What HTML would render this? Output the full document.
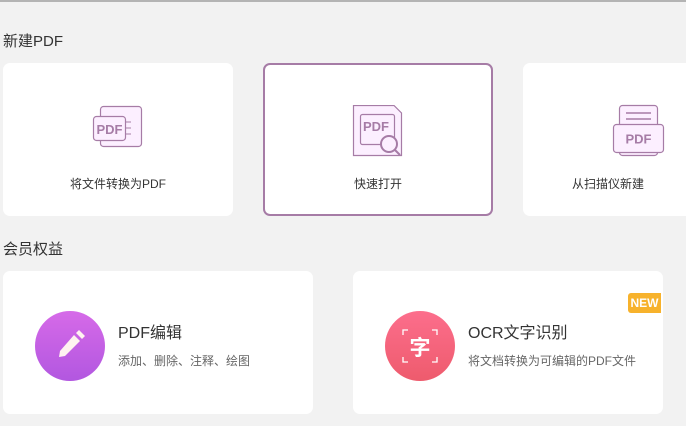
<!DOCTYPE html>
<html><head><meta charset="utf-8"><style>
*{margin:0;padding:0;box-sizing:border-box}
body{width:686px;height:426px;background:#f2f2f2;font-family:"Liberation Sans","Noto Sans CJK SC",sans-serif;position:relative;overflow:hidden;color:#333}
.top{position:absolute;left:0;top:0;width:686px;height:2px;background:#b4b4b4}
h2{position:absolute;font-weight:normal;font-size:15px;color:#333;left:3px}
.card{position:absolute;background:#fff;border-radius:7px}
.lbl{position:absolute;width:100%;text-align:center;top:112px;font-size:12px;color:#333}
svg{position:absolute}
.t{position:absolute;font-size:16px;color:#333}
.s{position:absolute;font-size:12px;color:#666}
.circ{position:absolute;width:70px;height:70px;border-radius:50%}
</style></head><body>
<div class="top"></div>
<h2 style="top:30px">新建PDF</h2>
<div class="card" style="left:3px;top:63px;width:230px;height:153px">
<svg style="left:88px;top:40px" width="56" height="56" viewBox="0 0 56 56">
<rect x="9.5" y="3.5" width="41" height="40" rx="3" fill="#fcefff" stroke="#a67ca6" stroke-width="1.2"/>
<rect x="2.5" y="13.5" width="32" height="24" rx="3" fill="#fcefff" stroke="#a67ca6" stroke-width="1.2"/>
<line x1="35" y1="19" x2="40" y2="19" stroke="#a67ca6"/><line x1="35" y1="25" x2="40" y2="25" stroke="#a67ca6"/><line x1="35" y1="31" x2="40" y2="31" stroke="#a67ca6"/>
<text x="18.5" y="31" text-anchor="middle" font-size="13" font-weight="bold" fill="#a67ca6" font-family="Liberation Sans">PDF</text>
</svg>
<div class="lbl">将文件转换为PDF</div></div>
<div class="card" style="left:263px;top:63px;width:230px;height:153px;border:2px solid #a67ca6">
<svg style="left:86px;top:40px" width="56" height="56" viewBox="0 0 56 56">
<path d="M2.5 0.5H43L50.5 8V50.5H2.5Z" fill="#fcefff" stroke="#a67ca6" stroke-width="1.2"/>
<rect x="9.5" y="9.5" width="34" height="30" rx="2" fill="#fcefff" stroke="#a67ca6" stroke-width="1.2"/>
<text x="25" y="26" text-anchor="middle" font-size="13" font-weight="bold" fill="#a67ca6" font-family="Liberation Sans">PDF</text>
<circle cx="38" cy="39" r="8" fill="#fcefff" stroke="#a67ca6" stroke-width="2"/>
<line x1="44" y1="45" x2="49" y2="50" stroke="#a67ca6" stroke-width="2"/>
</svg>
<div class="lbl" style="top:110px">快速打开</div></div>
<div class="card" style="left:523px;top:63px;width:170px;height:153px">
<svg style="left:88px;top:40px" width="56" height="56" viewBox="0 0 56 56">
<rect x="8.5" y="2.5" width="38" height="50" rx="3" fill="#fcefff" stroke="#a67ca6" stroke-width="1.2"/>
<line x1="15" y1="10" x2="40" y2="10" stroke="#a67ca6" stroke-width="1.5"/><line x1="15" y1="16" x2="40" y2="16" stroke="#a67ca6" stroke-width="1.5"/>
<rect x="2.5" y="21.5" width="50" height="28" rx="3" fill="#fcefff" stroke="#a67ca6" stroke-width="1.2"/>
<text x="27.5" y="40.5" text-anchor="middle" font-size="13" font-weight="bold" fill="#a67ca6" font-family="Liberation Sans">PDF</text>
</svg>
<div class="lbl" style="left:-40px;width:250px">从扫描仪新建</div></div>

<h2 style="top:238px">会员权益</h2>
<div class="card" style="left:3px;top:271px;width:310px;height:143px">
<div class="circ" style="left:32px;top:40px;background:linear-gradient(#d66ae8,#b257e0)"></div>
<svg style="left:50px;top:58px" width="36" height="36" viewBox="0 0 36 36">
<path d="M21 6L27 12L12 27L6 28L7 22Z" fill="#fff3f0"/><path d="M23 4L26 1L32 7L29 10Z" fill="#fff3f0"/>
</svg>
<div class="t" style="left:115px;top:48px">PDF编辑</div>
<div class="s" style="left:115px;top:81px">添加、删除、注释、绘图</div>
</div>
<div class="card" style="left:353px;top:271px;width:310px;height:143px">
<div class="circ" style="left:32px;top:40px;background:linear-gradient(#fc6e8c,#ee5b6d)"></div>
<svg style="left:32px;top:40px" width="70" height="70" viewBox="0 0 70 70">
<path d="M18 24V19H23M47 19H52V24M52 46V51H47M23 51H18V46" fill="none" stroke="#fff" stroke-width="1.3"/>
<text x="35" y="44" text-anchor="middle" font-size="21" font-weight="bold" fill="#fff" font-family="Noto Sans CJK SC,sans-serif">字</text>
</svg>
<div class="t" style="left:115px;top:48px">OCR文字识别</div>
<div class="s" style="left:115px;top:81px">将文档转换为可编辑的PDF文件</div>
<div style="position:absolute;left:275px;top:22px;width:33px;height:20px;background:#f7b22c;border-radius:3px 0 0 3px;color:#fff;font-size:12px;font-weight:bold;text-align:center;line-height:20px">NEW</div>
</div>
</body></html>
